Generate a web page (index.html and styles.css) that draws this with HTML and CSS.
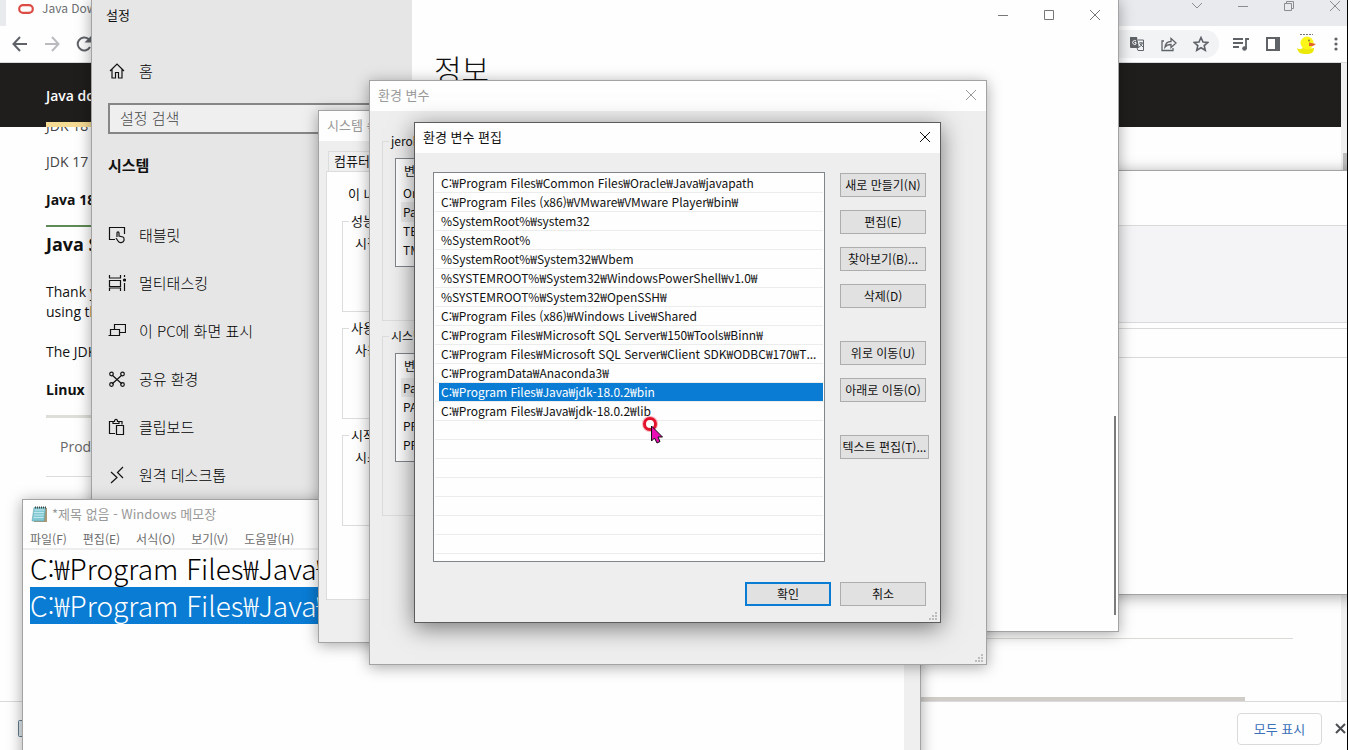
FILE: index.html
```html
<!DOCTYPE html>
<html lang="ko">
<head>
  <meta charset="UTF-8" />
  <meta name="viewport" content="width=device-width, initial-scale=1.0"/>
  <title>환경 변수 편집</title>
  <link rel="stylesheet" href="styles.css">
</head>

<body>
  <div class="desktop">

    <!-- BROWSER -->
    <div class="browser">
      <div class="tab-strip">
        <div class="tab">
          <svg width="16" height="10" viewBox="0 0 16 10"><rect x="1.2" y="1.2" width="13.6" height="7.6" rx="3.8" fill="none" stroke="#dd4b45" stroke-width="2.2"/></svg>
          <span>Java Downloads</span>
        </div>
        <div class="browser-controls">
          <svg viewBox="0 0 12 12"><path d="M1 3l5 5 5-5"/></svg>
          <svg viewBox="0 0 12 12"><path d="M1 6.500h10"/></svg>
          <svg viewBox="0 0 12 12"><path d="M1.500 3.500h7v7h-7zM3.500 3.500v-2h7v7h-2"/></svg>
          <svg viewBox="0 0 12 12"><path d="M1 1l10 10M11 1L1 11"/></svg>
        </div>
      </div>

      <div class="toolbar">
        <svg class="nav-icon" viewBox="0 0 16 16"><path d="M15 8H2M8 1L1.500 8 8 15"/></svg>
        <svg class="nav-icon off" viewBox="0 0 16 16"><path d="M1 8h13M8 1l6.500 7L8 15"/></svg>
        <svg class="nav-icon" viewBox="0 0 16 16"><path d="M14 11a6.500 6.500 0 1 1-1.500-8L14 5"/><path d="M15 0v6.500H8.500z" fill="#5f6368" stroke="none"/></svg>
        <div class="omnibox">
          <svg width="16" height="16" viewBox="0 0 16 16"><path d="M1 1h7l2 11H2a1 1 0 0 1-1-1z" fill="#5f6368"/><path d="M9 4h5.500v10.500H9l-1-2.500" fill="none" stroke="#5f6368"/><path d="M7 5a2 2 0 1 0 0 3V6.500H5.500" fill="none" stroke="#fff"/><path d="M10 7h4M12 6v1M13 7c0 2-1 3-3 4M11 8l3 3" fill="none" stroke="#5f6368"/></svg>
          <svg width="16" height="16" viewBox="0 0 16 16"><path d="M3 5H1v9.500h11V12M4 11c.5-4 3-5.500 6-5.500V2.500L15 7l-5 4.500V8.500c-3 0-4.500.5-6 2.500z" fill="none" stroke="#5f6368" stroke-width="1.300"/></svg>
          <svg width="16" height="16" viewBox="0 0 16 16"><path d="M8 1.500l2 4.500 4.800.4-3.600 3.200 1.100 4.700L8 11.800l-4.300 2.500 1.100-4.700L1.200 6.400 6 6z" fill="none" stroke="#5f6368" stroke-width="1.600"/></svg>
        </div>
        <svg width="16" height="16" viewBox="0 0 16 16"><path d="M0 3h10M0 7h10M0 11h6M13 13V3h3" fill="none" stroke="#5f6368" stroke-width="1.800"/><circle cx="11.500" cy="12.500" r="2.300" fill="#5f6368"/></svg>
        <svg width="14" height="14" viewBox="0 0 14 14"><path d="M1 1h12v12H1z" fill="none" stroke="#5f6368" stroke-width="2"/><path d="M9 1h4v12H9z" fill="#5f6368"/></svg>
        <svg width="20" height="20" viewBox="0 0 20 20"><path d="M3 .5h13" stroke="#777" stroke-dasharray="2 1"/><path d="M0 14c3 2 4 1 6 0h5c3 1 5 0 6 0 0 4-2 6-8 6-5 0-8-1-9-6z" fill="#ece80a"/><circle cx="10" cy="9" r="6.500" fill="#fbf617"/><path d="M12 8.500l7 1.500-3 2h-4z" fill="#e2632b"/><circle cx="12" cy="6.500" r="1" fill="#8a8420"/></svg>
        <svg width="4" height="14" viewBox="0 0 4 14" fill="#5f6368"><circle cx="2" cy="2" r="1.600"/><circle cx="2" cy="7" r="1.600"/><circle cx="2" cy="12" r="1.600"/></svg>
      </div>

      <div class="viewport">
        <div class="site">
          <div class="site-header"><a href="#">Java downloads</a></div>
          <div class="site-body">
            <p class="version">JDK 18</p>
            <p class="version">JDK 17</p>
            <p class="version current">Java 18</p>
            <h1>Java SE</h1>
            <p>Thank you for<br>using this</p>
            <p>The JDK</p>
            <h2>Linux</h2>
            <table class="downloads">
              <tr><th>Product</th></tr>
              <tr><td>x64 RPM</td></tr>
            </table>
            <div class="site-bottom"></div>
          </div>
        </div>
        <div class="page-scroll"></div>
      </div>

      <div class="download-bar">
        <svg width="16" height="17" viewBox="0 0 16 17"><rect x=".5" y=".5" width="15" height="16" rx="1" fill="#dfe7ec" stroke="#607b8d"/><path d="M4 12h8" stroke="#607b8d"/></svg>
        <button class="show-all">모두 표시</button>
        <svg width="11" height="11" viewBox="0 0 11 11"><path d="M1 1l9 9M10 1l-9 9" stroke="#4b4e52" stroke-width="2"/></svg>
      </div>
    </div>

    <!-- BACK WINDOW -->
    <div class="window back">
      <div class="back-top"></div>
      <div class="back-ribbon"></div>
      <div class="back-address"></div>
    </div>

    <!-- SETTINGS -->
    <div class="window settings">
      <div class="sidebar">
        <div class="settings-title">설정</div>
        <a class="side-link home" href="#">
          <svg viewBox="0 0 18 18"><path d="M2 9l7-7 7 7M4 7.500v8.500h3.500v-5.500h3V16H14V7.500"/></svg>홈
        </a>
        <input class="search" type="text" placeholder="설정 검색" aria-label="설정 검색">
        <h3>시스템</h3>
        <a class="side-link" href="#"><svg viewBox="0 0 18 18"><path d="M7 13.500H1.500v-12h15V8M9 11V7c0-1.500 2-1.500 2 0v3l4 1c1.500.5 1 2 1 3.500-1 2.500-4.500 3-6 .5L8 12"/></svg>태블릿</a>
        <a class="side-link" href="#"><svg viewBox="0 0 18 18"><path d="M1.500 1v3h11V1M1.500 6.500h11v6h-11zM1.500 17v-3h11v3M16.500 1v2M16.500 9v8"/><circle cx="16.500" cy="6" r="1" fill="#111"/></svg>멀티태스킹</a>
        <a class="side-link" href="#"><svg viewBox="0 0 18 18"><path d="M6.500 7.500v-5h11v8h-6M2.500 7.500h9v6h-9zM.5 13.500h11"/></svg>이 PC에 화면 표시</a>
        <a class="side-link" href="#"><svg viewBox="0 0 18 18"><path d="M4 5l10 9M14 5L4 14"/><circle cx="3.500" cy="4" r="1.800"/><circle cx="14.500" cy="4" r="1.800"/><circle cx="3.500" cy="14.500" r="1.800"/><circle cx="14.500" cy="14.500" r="1.800"/></svg>공유 환경</a>
        <a class="side-link" href="#"><svg viewBox="0 0 18 18"><path d="M7 15.500H1.500v-12H5M11 3.500h3v3M5 5.500v-2h1.500c0-3 3-3 3 0H11v2zM8.500 7.500h7v9h-7z"/></svg>클립보드</a>
        <a class="side-link" href="#"><svg viewBox="0 0 18 18"><path d="M3 6l6 5.500L3 17M15 1L9.500 6.500 15 12"/></svg>원격 데스크톱</a>
      </div>
      <div class="settings-main">
        <div class="window-controls">
          <svg viewBox="0 0 12 12"><path d="M1 6.500h10"/></svg>
          <svg viewBox="0 0 12 12"><path d="M1.500 1.500h9v9h-9z"/></svg>
          <svg viewBox="0 0 12 12"><path d="M1 1l10 10M11 1L1 11"/></svg>
        </div>
        <h1>정보</h1>
        <div class="thin-scroll"></div>
      </div>
    </div>

    <!-- NOTEPAD -->
    <div class="window notepad">
      <div class="title-bar">
        <svg width="17" height="17" viewBox="0 0 17 17"><path d="M4 2h12v14H3z" fill="#a99873"/><path d="M3 1.500h11.500L13 15H1z" fill="#82c8d3" stroke="#5ba5b1" stroke-width=".6"/><path d="M3.500 4h10M3 6.500h10M3 9h9.500M2.500 11.500h10" stroke="#bfe9ee"/><path d="M4 1.500h11" stroke="#444" stroke-width="2" stroke-dasharray="1 1"/></svg>
        <span>*제목 없음 - Windows 메모장</span>
      </div>
      <div class="menu">
        <span>파일(F)</span><span>편집(E)</span><span>서식(O)</span><span>보기(V)</span><span>도움말(H)</span>
      </div>
      <div class="note">
        <div class="note-text" contenteditable="true" spellcheck="false" role="textbox" aria-label="메모">
          <div>C:₩Program Files₩Java₩</div>
          <div class="marked">C:₩Program Files₩Java₩</div>
        </div>
        <div class="note-scroll"></div>
      </div>
    </div>

    <!-- SYSTEM PROPERTIES -->
    <div class="window system">
      <div class="title-bar">시스템 속성</div>
      <div class="system-body">
        <button class="sheet-tab">컴퓨터 이름</button>
        <div class="sheet">
          <p>이 내용을 변경</p>
          <fieldset><legend>성능</legend><p>시각 효과</p></fieldset>
          <fieldset><legend>사용자 프로필</legend><p>사용자 로그인</p></fieldset>
          <fieldset><legend>시작 및 복구</legend><p>시스템 시작</p></fieldset>
        </div>
      </div>
    </div>

    <!-- ENVIRONMENT VARIABLES -->
    <div class="window env">
      <div class="title-bar">환경 변수
        <svg class="close" viewBox="0 0 12 12"><path d="M1 1l10 10M11 1L1 11"/></svg>
      </div>
      <div class="env-body">
        <fieldset>
          <legend>jerok</legend>
          <table class="vars">
            <tr><th>변수</th></tr>
            <tr><td>OneDrive</td></tr>
            <tr class="picked"><td>Path</td></tr>
            <tr><td>TEMP</td></tr>
            <tr><td>TMP</td></tr>
          </table>
        </fieldset>
        <fieldset>
          <legend>시스템 변수</legend>
          <table class="vars">
            <tr><th>변수</th></tr>
            <tr class="picked"><td>Path</td></tr>
            <tr><td>PATHEXT</td></tr>
            <tr><td>PROCESSOR</td></tr>
            <tr><td>PROCESSOR</td></tr>
          </table>
        </fieldset>
      </div>
      <svg class="grip" viewBox="0 0 8 8"><path d="M6 0h2v2H6zM3 3h2v2H3zM6 3h2v2H6zM0 6h2v2H0zM3 6h2v2H3zM6 6h2v2H6z"/></svg>
    </div>

    <!-- EDIT DIALOG -->
    <div class="window edit active">
      <div class="title-bar">환경 변수 편집
        <svg class="close" viewBox="0 0 12 12"><path d="M1 1l10 10M11 1L1 11"/></svg>
      </div>
      <div class="edit-body">
        <ul class="paths">
          <li><span>C:₩Program Files₩Common Files₩Oracle₩Java₩javapath</span></li>
          <li><span>C:₩Program Files (x86)₩VMware₩VMware Player₩bin₩</span></li>
          <li><span>%SystemRoot%₩system32</span></li>
          <li><span>%SystemRoot%</span></li>
          <li><span>%SystemRoot%₩System32₩Wbem</span></li>
          <li><span>%SYSTEMROOT%₩System32₩WindowsPowerShell₩v1.0₩</span></li>
          <li><span>%SYSTEMROOT%₩System32₩OpenSSH₩</span></li>
          <li><span>C:₩Program Files (x86)₩Windows Live₩Shared</span></li>
          <li><span>C:₩Program Files₩Microsoft SQL Server₩150₩Tools₩Binn₩</span></li>
          <li><span>C:₩Program Files₩Microsoft SQL Server₩Client SDK₩ODBC₩170₩T...</span></li>
          <li><span>C:₩ProgramData₩Anaconda3₩</span></li>
          <li class="selected"><span>C:₩Program Files₩Java₩jdk-18.0.2₩bin</span></li>
          <li><span>C:₩Program Files₩Java₩jdk-18.0.2₩lib</span></li>
          <li></li><li></li><li></li><li></li><li></li><li></li><li></li>
        </ul>
        <div class="actions">
          <button>새로 만들기(N)</button>
          <button>편집(E)</button>
          <button>찾아보기(B)...</button>
          <button>삭제(D)</button>
          <button class="group">위로 이동(U)</button>
          <button>아래로 이동(O)</button>
          <button class="group wide">텍스트 편집(T)...</button>
        </div>
      </div>
      <div class="edit-footer">
        <button class="default">확인</button>
        <button>취소</button>
      </div>
      <svg class="grip" viewBox="0 0 8 8"><path d="M6 0h2v2H6zM3 3h2v2H3zM6 3h2v2H6zM0 6h2v2H0zM3 6h2v2H3zM6 6h2v2H6z"/></svg>
    </div>

    <!-- MOUSE POINTER -->
    <svg class="pointer" viewBox="0 0 24 30">
      <circle cx="10" cy="10" r="8" fill="#f36a78" opacity=".5"/>
      <circle cx="10" cy="10" r="5.500" fill="#fff" stroke="#e3122d" stroke-width="3"/>
      <path d="M11.500 12v15l3-3 2.500 5 3-1.500-2-4.500h4.500z" fill="#ea0fb4" stroke="#111"/>
    </svg>
  </div>
</body>
</html>
```
FILE: styles.css
```css
* {
  box-sizing: border-box;
}

body {
  margin: 0;
  font-family: "Noto Sans CJK KR", sans-serif;
  font-size: 13px;
  line-height: 16px;
  color: #111;
}

h1, h2, h3, p, ul {
  margin: 0;
  padding: 0;
}

a {
  color: inherit;
  text-decoration: none;
}

button {
  font: inherit;
  color: inherit;
}

svg {
  flex: none;
}

.desktop {
  position: relative;
  height: 100vh;
  overflow: hidden;
  border-right: 1px solid #000;
}

/* browser */
.browser {
  display: flex;
  flex-direction: column;
  height: 100%;
  background: #fefefe;
  isolation: isolate;
}

.tab-strip {
  display: flex;
  justify-content: space-between;
  height: 26px;
  padding-left: 6px;
  background: #e8eaed;
}

.tab {
  display: flex;
  gap: 8px;
  width: 240px;
  padding-left: 12px;
  background: #fefefe;
  color: #6b6e73;
  font-size: 12px;
}

.tab svg {
  margin-top: 4px;
}

.browser-controls {
  display: flex;
  gap: 34px;
  padding-right: 6px;
}

.browser-controls svg {
  width: 12px;
  height: 12px;
  fill: none;
  stroke: #8a8c90;
}

.toolbar {
  display: flex;
  align-items: center;
  gap: 16px;
  height: 37px;
  padding: 0 8px 0 12px;
  border-bottom: 1px solid #d8dadd;
}

.nav-icon {
  width: 16px;
  height: 16px;
  fill: none;
  stroke: #5f6368;
  stroke-width: 2;
}

.nav-icon.off {
  stroke: #b9bbbe;
}

.omnibox {
  flex: 1;
  display: flex;
  justify-content: flex-end;
  align-items: center;
  gap: 16px;
  height: 28px;
  margin-right: -2px;
  padding-right: 10px;
  border-radius: 14px;
  background: #f1f3f4;
}

.omnibox ~ svg {
  margin-right: 1px;
}

.viewport {
  flex: 1;
  display: flex;
  min-height: 0;
}

.site {
  flex: 1;
  display: flex;
  flex-direction: column;
  font-family: "Open Sans", sans-serif;
  font-size: 14px;
  line-height: 20px;
}

.site-header {
  position: relative;
  z-index: 1;
  height: 64px;
  padding-left: 46px;
  background: #201e1c;
  color: #fff;
  font-weight: 600;
}

.site-header a {
  display: inline-block;
  height: 64px;
  padding-top: 23px;
  border-bottom: 5px solid #f5da94;
}

.site-body {
  flex: 1;
  display: flex;
  flex-direction: column;
  min-height: 0;
  margin-top: -11px;
  padding: 0 48px 0 46px;
}

.site-body p {
  margin-bottom: 20px;
}

.site-body .version {
  margin-bottom: 16px;
  color: #444;
}

.site-body .current {
  margin: 2px 0 7px;
  padding-bottom: 15px;
  border-bottom: 2px solid #5f8a55;
  color: #111;
  font-weight: bold;
}

.site-body h1 {
  margin-bottom: 28px;
  font-size: 18px;
}

.site-body h2 {
  margin: -2px 0 15px;
  font-size: 14px;
}

.downloads {
  border-top: 3px solid #deded8;
  border-collapse: collapse;
}

.downloads th, .downloads td {
  height: 60px;
  padding: 0 14px;
  border-bottom: 1px solid #dcdcdc;
  color: #666;
  font-weight: normal;
  text-align: left;
}

.site-bottom {
  height: 63px;
  margin-top: auto;
  border-top: 1px solid #dcdad6;
  background: linear-gradient(#d0cdc9, #d0cdc9) left bottom / calc(100% - 48px) 4px no-repeat;
}

.page-scroll {
  width: 6px;
  background: linear-gradient(#bdbdbd, #bdbdbd) 2px 90px / 4px 120px no-repeat #f0f0f0;
}

.download-bar {
  display: flex;
  align-items: center;
  gap: 13px;
  height: 49px;
  padding: 5px 1px 0 18px;
  border-top: 1px solid #d8dadc;
}

.show-all {
  width: 85px;
  height: 32px;
  margin-left: auto;
  border: 1px solid #d8dadc;
  border-radius: 4px;
  background: #fefefe;
  color: #3a70b8;
}

/* windows */
.window {
  position: absolute;
  border: 1px solid #a3a3a3;
  background: #fefefe;
  box-shadow: 0 2px 14px rgba(0, 0, 0, 0.35);
}

.window.active {
  border-color: #5c5c5c;
  box-shadow: 0 5px 22px rgba(0, 0, 0, 0.5);
}

.title-bar {
  display: flex;
  align-items: center;
  height: 30px;
  padding: 0 8px 2px;
  background: #fefefe;
  color: #999;
}

.active .title-bar {
  color: #111;
}

.close {
  width: 12px;
  height: 12px;
  margin-left: auto;
  stroke: currentColor;
}

.env .close, .edit .close {
  margin-right: 1px;
}

.grip {
  position: absolute;
  right: 3px;
  bottom: 2px;
  width: 8px;
  height: 8px;
  fill: #bdbdbd;
}

.back {
  top: 170px;
  left: 800px;
  right: -10px;
  height: 425px;
}

.back-top {
  height: 54px;
}

.back-ribbon {
  height: 98px;
  border: solid #d9d9d9;
  border-width: 1px 0;
  background: #f4f4f6;
}

.back-address {
  height: 30px;
  margin-top: 5px;
  border: solid #d9d9d9;
  border-width: 1px 0;
}

/* settings */
.settings {
  top: -1px;
  left: 91px;
  width: 1028px;
  height: 633px;
  display: flex;
}

.sidebar {
  width: 320px;
  padding: 7px 16px 0;
  background: #e6e6e6;
  font-size: 15px;
  line-height: 20px;
}

.settings-title {
  margin-left: -2px;
  font-size: 13px;
  line-height: 16px;
}

.side-link {
  display: flex;
  align-items: center;
  gap: 13px;
  height: 48px;
  color: #000;
  font-weight: 300;
}

.side-link svg {
  width: 18px;
  height: 18px;
  fill: none;
  stroke: #111;
  stroke-width: 1.2;
}

.side-link.home {
  margin: 24px 0 8px;
}

.search {
  display: block;
  width: 100%;
  height: 31px;
  padding: 0 10px 2px;
  border: 2px solid #868686;
  background: #efefef;
  font: inherit;
  font-weight: 300;
}

.search::placeholder {
  color: #444;
}

.sidebar h3 {
  margin: 21px 0 36px;
  font-size: 15px;
}

.settings-main {
  flex: 1;
  position: relative;
  padding: 9px 17px 0 22px;
}

.settings-main h1 {
  margin-top: 27px;
  font-size: 30px;
  font-weight: 300;
  line-height: 40px;
}

.window-controls {
  display: flex;
  justify-content: flex-end;
  gap: 34px;
}

.window-controls svg {
  width: 12px;
  height: 12px;
  fill: none;
  stroke: #777;
}

.thin-scroll {
  position: absolute;
  right: 2px;
  top: 416px;
  width: 2px;
  height: 199px;
  background: #7b7b7b;
}

/* notepad */
.notepad {
  top: 499px;
  left: 22px;
  width: 899px;
  height: 300px;
}

.notepad .title-bar {
  gap: 4px;
  height: 28px;
  padding-bottom: 0;
}

.menu {
  display: flex;
  gap: 16px;
  height: 22px;
  padding: 3px 7px 0;
  border-bottom: 2px solid #eee;
  color: #6d6d6d;
  font-size: 12px;
}

.note {
  display: flex;
  height: 248px;
}

.note-text {
  flex: 1;
  padding-left: 7px;
  color: #000;
  font-size: 28px;
  font-weight: 300;
  line-height: 37px;
}

.marked {
  background: #0a7cd4;
  color: #fff;
}

.note-scroll {
  width: 16px;
  background: #efefef;
}

/* dialogs */
fieldset {
  margin: 0;
  padding: 0 6px;
  border: 1px solid #dcdcdc;
}

legend {
  padding: 0 2px;
}

.system {
  top: 110px;
  left: 318px;
  width: 420px;
  height: 533px;
  background: #eee;
}

.system-body {
  padding: 10px 7px 0;
}

.sheet-tab {
  display: block;
  height: 20px;
  margin-left: 2px;
  padding: 0 5px 2px;
  border: 1px solid #dcdcdc;
  border-bottom: 0;
  background: #f0f0f0;
}

.sheet {
  height: 429px;
  padding: 14px 15px 0;
  border: 1px solid #dcdcdc;
  background: #fefefe;
}

.sheet > p {
  margin-bottom: 11px;
  padding-left: 6px;
}

.sheet fieldset {
  height: 99px;
  margin-bottom: 8px;
}

.sheet fieldset p {
  padding: 6px 6px 0;
}

.env {
  top: 80px;
  left: 369px;
  width: 618px;
  height: 585px;
  background: #eee;
}

.env-body {
  width: 480px;
  padding: 22px 12px 0;
}

.env fieldset {
  height: 188px;
  margin-bottom: 7px;
  padding: 0 12px;
}

.env legend {
  margin-left: -6px;
  font-size: 12px;
}

.vars {
  width: 100%;
  height: 109px;
  margin-top: 9px;
  padding: 0 5px 6px;
  border: 1px solid #7f868c;
  border-spacing: 0;
  background: #fefefe;
  font-size: 12px;
}

.vars th {
  height: 24px;
  padding: 0 3px;
  font-weight: normal;
  text-align: left;
}

.vars td {
  height: 19px;
  padding: 0 2px;
}

.picked {
  background: #eee;
}

.edit {
  top: 122px;
  left: 414px;
  width: 527px;
  height: 501px;
  background: #eee;
}

.edit-body {
  display: flex;
  gap: 15px;
  padding: 19px 11px 0 18px;
}

.paths {
  flex: 1;
  min-width: 0;
  height: 390px;
  padding: 1px;
  border: 1px solid #7f868c;
  background: #fefefe;
  font-size: 12px;
  list-style: none;
}

.paths li {
  height: 19px;
  padding-left: 4px;
  border-bottom: 1px solid #ececec;
}

.paths span {
  display: block;
  height: 18px;
  padding-left: 2px;
  line-height: 18px;
  white-space: nowrap;
}

.selected span {
  background: #0a7cd4;
  color: #fff;
}

.actions {
  display: flex;
  flex-direction: column;
  gap: 13px;
  width: 89px;
  padding-top: 1px;
}

.edit button {
  width: 86px;
  height: 24px;
  padding: 0;
  border: 1px solid #adadad;
  background: #e1e1e1;
  font-size: 12px;
  white-space: nowrap;
}

.edit .group {
  margin-top: 20px;
}

.edit .wide {
  width: 89px;
}

.edit-footer {
  display: flex;
  justify-content: flex-end;
  gap: 9px;
  padding: 20px 14px 0;
}

.edit .default {
  border: 2px solid #0a7cd4;
}

.pointer {
  position: absolute;
  top: 414px;
  left: 640px;
  width: 24px;
  height: 30px;
}
```
